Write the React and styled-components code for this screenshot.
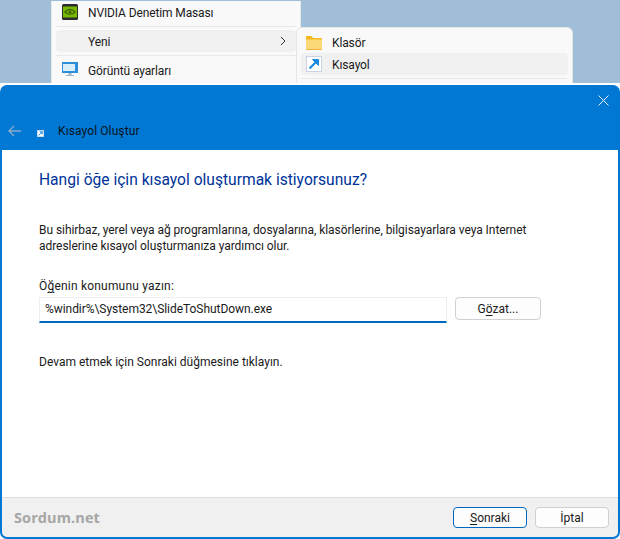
import React from "react";
import styled, { createGlobalStyle } from "styled-components";

const Global = createGlobalStyle`
  html, body { margin: 0; padding: 0; background: #fff; }
  * { box-sizing: border-box; }
  body { font-family: Roboto, "Noto Sans", sans-serif; font-size: 12px; color: #1a1a1a; }
`;

const Page = styled.div`
  width: 620px;
  height: 539px;
  overflow: hidden;
  display: flex;
  flex-direction: column;
  background: #fff;
`;

const Desktop = styled.div`
  position: relative;
  height: 83px;
  flex: none;
  background: #a1bed8;
  padding: 1px 0 0 51px;
  overflow: hidden;
`;

const Menu = styled.div`
  width: 250px;
  height: 82px;
  background: #f9f9f9;
  border-left: 1px solid #e8e8e8;
  border-right: 1px solid #e8e8e8;
  padding: 0 4px;
`;

const MenuRow = styled.div`
  display: flex;
  align-items: center;
  height: ${(p) => p.$h || 22}px;
  border-radius: 4px;
  background: ${(p) => (p.$active ? "#f0f0f0" : "transparent")};
`;

const IconSlot = styled.span`
  width: 26px;
  margin-left: ${(p) => p.$ml || 6}px;
  flex: none;
  display: flex;
`;

const MenuText = styled.span`
  flex: 1;
  padding-top: 1px;
  font-size: 12px;
  letter-spacing: -0.12px;
  color: #1a1a1a;
`;

const Divider = styled.div`
  height: 1px;
  background: #e8e8e8;
  margin: ${(p) => p.$m || "3px 0"};
`;

const Submenu = styled.div`
  position: absolute;
  left: 296px;
  top: 27px;
  width: 277px;
  height: 60px;
  background: #f9f9f9;
  border: 1px solid #e6e6e6;
  border-radius: 6px 6px 0 0;
  padding: 4px 4px 0;
`;

const Dialog = styled.div`
  margin-top: 2px;
  flex: 1;
  display: flex;
  flex-direction: column;
  background: #0078d4;
  border-radius: 7px;
  padding: 0 2px 2px;
  min-height: 0;
`;

const Header = styled.div`
  height: 65px;
  flex: none;
  display: flex;
  flex-direction: column;
  margin: 0 -2px;
`;

const CloseRow = styled.div`
  height: 21px;
  display: flex;
  justify-content: flex-end;
  align-items: flex-end;
  padding-right: 11px;
`;

const TitleRow = styled.div`
  flex: 1;
  display: flex;
  align-items: center;
  padding: 6px 0 0 8px;
`;

const BackIcon = styled.span`
  display: flex;
  width: 29px;
`;

const SmallIcon = styled.span`
  display: flex;
  width: 21px;
  padding-top: 4px;
`;

const TitleText = styled.span`
  font-size: 12px;
  letter-spacing: 0.1px;
  color: #0a1420;
`;

const Body = styled.div`
  flex: 1;
  background: #fff;
  padding: 19px 37px 0;
  display: flex;
  flex-direction: column;
`;

const Heading = styled.h1`
  margin: 0;
  font-weight: 400;
  font-size: 15.6px;
  line-height: 22px;
  color: #003399;
`;

const Para = styled.p`
  margin: ${(p) => p.$m || 0};
  font-size: 12px;
  line-height: 16px;
  letter-spacing: ${(p) => p.$ls || 0}px;
  color: #1a1a1a;
`;

const InputRow = styled.div`
  display: flex;
  gap: 8px;
  margin-top: 3px;
  align-items: flex-start;
`;

const Input = styled.div`
  width: 408px;
  height: 26px;
  padding: 0 5px 2px;
  display: flex;
  align-items: center;
  background: #fff;
  border: 1px solid #eeeeee;
  border-bottom: 2px solid #0067c0;
  font-size: 12px;
  letter-spacing: -0.05px;
  color: #1a1a1a;
  white-space: nowrap;
`;

const Button = styled.button`
  width: ${(p) => p.$w || 74}px;
  height: ${(p) => p.$h || 21}px;
  padding: 0;
  font-family: inherit;
  font-size: 12px;
  color: #1a1a1a;
  background: #fdfdfd;
  border-radius: 4px;
  border: 1px solid ${(p) => (p.$primary ? "#0067c0" : "#d0d0d0")};
`;

const Footer = styled.div`
  height: 40px;
  flex: none;
  background: #f0f0f0;
  border-top: 1px solid #dfdfdf;
  border-radius: 0 0 5px 5px;
  display: flex;
  align-items: center;
  padding: 0 9px 0 12px;
  gap: 8px;
`;

const Brand = styled.span`
  flex: 1;
  font-family: "Open Sans", sans-serif;
  font-weight: 700;
  font-size: 14.5px;
  letter-spacing: 0.1px;
  color: #a6a6a6;
`;

const U = styled.span`
  text-decoration: underline;
  text-underline-offset: 2px;
`;

const NvidiaIcon = () => (
  <svg width="16" height="16" viewBox="0 0 16 16">
    <rect width="16" height="16" rx="1.5" fill="#2b2b2b" />
    <rect x="1" y="2.5" width="14" height="11" fill="#76b900" />
    <path d="M3 8c3-3.5 7-3.5 10 0-3 3-7 3-10 0z" fill="none" stroke="#3d5c06" strokeWidth="1.2" />
    <circle cx="8" cy="8" r="1.5" fill="#3d5c06" />
  </svg>
);

const MonitorIcon = () => (
  <svg width="16" height="16" viewBox="0 0 16 16">
    <rect x="0" y="0" width="16" height="11" fill="#2e8fd8" />
    <rect x="1" y="2" width="12" height="7" fill="#d8effb" />
    <rect x="6.5" y="11" width="3" height="2" fill="#9fb6c6" />
    <rect x="4" y="13" width="8" height="1" fill="#9fb6c6" />
  </svg>
);

const FolderIcon = () => (
  <svg width="16" height="14" viewBox="0 0 16 14">
    <path d="M0 1.2C0 .5.5 0 1.2 0h4l2 2H15c.6 0 1 .4 1 1v2H0z" fill="#f5b821" />
    <path d="M0 3.5h16V13c0 .6-.4 1-1 1H1c-.6 0-1-.4-1-1z" fill="#fcd978" />
    <path d="M0 13h16v.2c0 .5-.4.8-.9.8H.9c-.5 0-.9-.3-.9-.8z" fill="#edb53a" />
  </svg>
);

const ShortcutIcon = ({ size = 16 }) => (
  <svg width={size} height={size} viewBox="0 0 16 16">
    <rect x=".5" y=".5" width="15" height="15" fill="#fff" stroke="#c9d3e6" />
    <path d="M3.5 12.5 10 6" fill="none" stroke="#1c8ae0" strokeWidth="2.2" />
    <path d="M6.5 3.5h6v6z" fill="#1c8ae0" stroke="#1c8ae0" strokeWidth="1" />
  </svg>
);

export default function App() {
  return (
    <Page>
      <Global />
      <Desktop>
        <Menu>
          <MenuRow $h={22}>
            <IconSlot>
              <NvidiaIcon />
            </IconSlot>
            <MenuText>NVIDIA Denetim Masası</MenuText>
          </MenuRow>
          <Divider $m="3px 0" />
          <MenuRow $active $h={22}>
            <IconSlot />
            <MenuText>Yeni</MenuText>
            <svg width="6" height="10" viewBox="0 0 6 10" style={{ marginRight: 10 }}>
              <path d="M1 1l4 4-4 4" fill="none" stroke="#333" strokeWidth="1" />
            </svg>
          </MenuRow>
          <Divider $m="3px 0" />
          <MenuRow $h={22}>
            <IconSlot>
              <MonitorIcon />
            </IconSlot>
            <MenuText>Görüntü ayarları</MenuText>
          </MenuRow>
        </Menu>
        <Submenu>
          <MenuRow $h={21}>
            <IconSlot $ml={5}>
              <FolderIcon />
            </IconSlot>
            <MenuText>Klasör</MenuText>
          </MenuRow>
          <MenuRow $active $h={22}>
            <IconSlot $ml={5}>
              <ShortcutIcon />
            </IconSlot>
            <MenuText>Kısayol</MenuText>
          </MenuRow>
          <Divider $m="3px 0" />
        </Submenu>
      </Desktop>
      <Dialog>
        <Header>
          <CloseRow>
            <svg width="11" height="11" viewBox="0 0 11 11">
              <path d="M.5.5l10 10M10.5.5l-10 10" stroke="#e8f2fb" strokeWidth="1" />
            </svg>
          </CloseRow>
          <TitleRow>
            <BackIcon>
              <svg width="13" height="12" viewBox="0 0 13 12">
                <path d="M6 1 1 6l5 5M1 6h12" fill="none" stroke="#86a9cc" strokeWidth="1.4" />
              </svg>
            </BackIcon>
            <SmallIcon>
              <ShortcutIcon size={7} />
            </SmallIcon>
            <TitleText>Kısayol Oluştur</TitleText>
          </TitleRow>
        </Header>
        <Body>
          <Heading>Hangi öğe için kısayol oluşturmak istiyorsunuz?</Heading>
          <Para $m="31px 0 0" $ls={-0.05}>
            Bu sihirbaz, yerel veya ağ programlarına, dosyalarına, klasörlerine, bilgisayarlara veya Internet
            <br />
            adreslerine kısayol oluşturmanıza yardımcı olur.
          </Para>
          <Para $m="24px 0 0" $ls={0.2}>
            Ö<U>ğ</U>enin konumunu yazın:
          </Para>
          <InputRow>
            <Input>%windir%\System32\SlideToShutDown.exe</Input>
            <Button $w={86} $h={23}>
              G<U>ö</U>zat...
            </Button>
          </InputRow>
          <Para $m="31px 0 0">Devam etmek için Sonraki düğmesine tıklayın.</Para>
        </Body>
        <Footer>
          <Brand>Sordum.net</Brand>
          <Button $primary>
            <U>S</U>onraki
          </Button>
          <Button>İptal</Button>
        </Footer>
      </Dialog>
    </Page>
  );
}
